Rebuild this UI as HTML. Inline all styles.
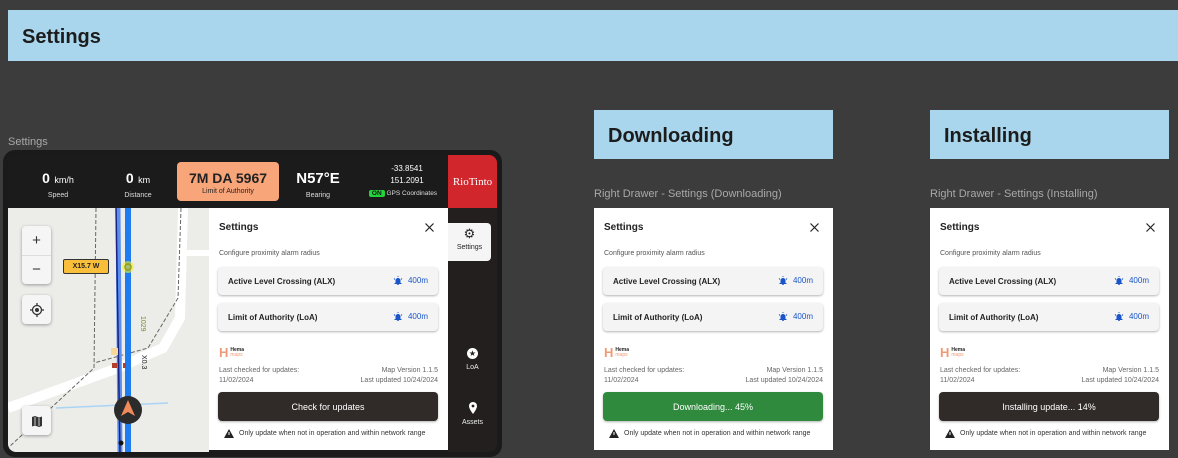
<!DOCTYPE html>
<html><head><meta charset="utf-8">
<style>
*{box-sizing:border-box;margin:0;padding:0}
body{width:1178px;height:458px;background:#3c3c3c;font-family:"Liberation Sans",sans-serif;position:relative;overflow:hidden}
.a{position:absolute}
.banner{background:#a9d6ec;color:#1c1c1c;font-weight:bold;font-size:20px;display:flex;align-items:center;padding-left:14px;padding-top:3px}
.lbl{color:#a8a8a8;font-size:11px}
.panel{position:absolute;width:239px;height:242px;background:#fff;color:#222}
.panel .t{position:absolute;left:10px;top:14px;font-size:10px;font-weight:bold;color:#222}
.panel .x{position:absolute;right:14px;top:15px}
.panel .cfg{position:absolute;left:10px;top:42px;font-size:7px;color:#555}
.card{position:absolute;left:9px;width:220px;height:28px;background:#f4f4f4;border-radius:4px;box-shadow:0 1px 2px rgba(0,0,0,.3);font-size:8px;font-weight:bold;color:#222;display:flex;align-items:center;padding-left:10px}
.card .v{position:absolute;right:10px;top:9px;color:#1a56c8;font-weight:normal;font-size:8px;display:flex;align-items:center;gap:5px}
.hema{position:absolute;left:10px;top:137px;display:flex;align-items:center;gap:2px}
.meta{position:absolute;left:10px;right:10px;top:158px;font-size:7px;color:#666;line-height:10px}
.meta .r{position:absolute;right:0;top:0;text-align:right}
.btn{position:absolute;left:9px;width:220px;top:184px;height:29px;border-radius:4px;color:#fff;font-size:9px;display:flex;align-items:center;justify-content:center;box-shadow:0 1px 2px rgba(0,0,0,.3)}
.warn{position:absolute;left:15px;top:221px;font-size:7px;color:#333;display:flex;align-items:center;gap:5px}
.tb{color:#fff;text-align:center;position:absolute}
.tb b{font-size:14px}
.tb span{font-size:7px;color:#ddd;display:block;margin-top:4px}
.mapbtn{position:absolute;background:#f5f5f5;border-radius:4px;box-shadow:0 1px 3px rgba(0,0,0,.35);width:29px;display:flex;align-items:center;justify-content:center;color:#333}
</style></head><body>

<div class="a banner" style="left:8px;top:10px;width:1170px;height:51px">Settings</div>
<div class="a banner" style="left:594px;top:110px;width:239px;height:49px">Downloading</div>
<div class="a banner" style="left:930px;top:110px;width:239px;height:49px">Installing</div>

<div class="a lbl" style="left:8px;top:136px">Settings</div>
<div class="a lbl" style="left:594px;top:188px">Right Drawer - Settings (Downloading)</div>
<div class="a lbl" style="left:930px;top:188px">Right Drawer - Settings (Installing)</div>

<!-- device -->
<div class="a" style="left:3px;top:150px;width:499px;height:307px;background:#1a1a1a;border-radius:12px"></div>
<div class="a" style="left:8px;top:155px;width:489px;height:297px;background:#1b1b1b;border-radius:8px;overflow:hidden">
  <div class="tb" style="left:20px;top:15px;width:60px"><b>0</b> <small style="font-size:9px">km/h</small><span>Speed</span></div>
  <div class="tb" style="left:100px;top:15px;width:60px"><b>0</b> <small style="font-size:9px">km</small><span>Distance</span></div>
  <div class="a" style="left:169px;top:7px;width:102px;height:39px;background:#f9a57a;border-radius:4px;text-align:center;color:#222">
    <div style="font-size:14px;font-weight:bold;margin-top:8px">7M DA 5967</div>
    <div style="font-size:7px;margin-top:2px">Limit of Authority</div>
  </div>
  <div class="tb" style="left:280px;top:15px;width:60px"><b style="font-size:15px">N57°E</b><span>Bearing</span></div>
  <div class="a" style="left:350px;top:8px;width:90px;color:#fff;font-size:8px;text-align:center;line-height:12px">
    <div style="margin-left:8px">-33.8541</div><div style="margin-left:8px">151.2091</div>
    <div style="font-size:6.5px;color:#ddd;margin-top:1px"><span style="background:#22d33a;color:#111;padding:0 3px;border-radius:2px;font-weight:bold">ON</span> GPS Coordinates</div>
  </div>
  <div class="a" style="left:440px;top:0;width:49px;height:53px;background:#d1262b;color:#fff;font-family:'Liberation Serif',serif;font-size:11px;display:flex;align-items:center;justify-content:center">RioTinto</div>
  <!-- rail -->
  <div class="a" style="left:440px;top:53px;width:49px;height:244px;background:#231f1f"></div>
  <div class="a" style="left:440px;top:68px;width:43px;height:38px;background:#f5f5f5;border-radius:0 4px 4px 0;text-align:center;font-size:7px;color:#222">
    <div style="font-size:13px;margin-top:3px">⚙</div><div style="margin-top:2px">Settings</div>
  </div>
  <div class="a" style="left:440px;top:193px;width:49px;text-align:center;color:#eee;font-size:7px">
    <div style="width:11px;height:11px;border-radius:50%;background:#fff;color:#231f1f;font-size:8px;line-height:11px;margin:0 auto">★</div><div style="margin-top:5px">LoA</div>
  </div>
  <div class="a" style="left:440px;top:247px;width:49px;text-align:center;color:#eee;font-size:7px">
    <svg width="10" height="12" viewBox="0 0 10 12"><path d="M5 0a4 4 0 0 0-4 4c0 3 4 8 4 8s4-5 4-8a4 4 0 0 0-4-4z" fill="#fff"/><circle cx="5" cy="4" r="1.4" fill="#231f1f"/></svg><div style="margin-top:3px">Assets</div>
  </div>
  <!-- map -->
  <div class="a" style="left:0;top:53px;width:201px;height:244px;background:#ecece9;overflow:hidden">
    <svg class="a" style="left:0;top:0" width="201" height="244">
      <path d="M0 200 L110 160 L155 140 L172 110 L175 0" stroke="#fff" stroke-width="10" fill="none"/>
      <path d="M175 45 L201 45" stroke="#fff" stroke-width="6"/>
      <path d="M88 0 L86 160 L0 240" stroke="#666" stroke-width="1" stroke-dasharray="4 2" fill="none"/>
      <path d="M173 0 L170 90 L140 140 L86 155" stroke="#666" stroke-width="1" stroke-dasharray="4 2" fill="none"/>
      <path d="M48 200 L160 195" stroke="#aad4f5" stroke-width="1.5"/>
      <path d="M110 0 L112 244" stroke="#5a8ff0" stroke-width="5"/>
      <path d="M120 0 L120 244" stroke="#1e7cf2" stroke-width="6"/>
      <path d="M108 0 L112 244" stroke="#1a237e" stroke-width="1.5"/>
      <circle cx="120" cy="59" r="6" fill="#f3f02a" opacity=".6"/><circle cx="120" cy="59" r="3" fill="none" stroke="#9a9a10" stroke-width="1.5"/>
      <rect x="103" y="140" width="7" height="7" fill="#f7d899"/>
      <rect x="104" y="155" width="5" height="5" fill="#b5402a"/><rect x="115" y="155" width="3" height="5" fill="#b5402a"/>
      <circle cx="120" cy="202" r="14" fill="#2b2b2b"/><path d="M120 192 L127 208 L120 204 L113 208Z" fill="#f08a5a"/>
      <circle cx="113" cy="235" r="2.5" fill="#111"/>
      <text x="133" y="108" font-size="7" fill="#7a8a30" transform="rotate(90 133 108)">1029</text>
      <text x="134" y="147" font-size="7" fill="#222" transform="rotate(90 134 147)">X0.3</text>
    </svg>
    <div class="a" style="left:55px;top:51px;width:46px;height:15px;background:#f9bf3a;border:1px solid #333;border-radius:2px;font-size:7px;font-weight:bold;display:flex;align-items:center;justify-content:center;color:#222">X15.7 W</div>
    <div class="mapbtn" style="left:14px;top:18px;height:58px;flex-direction:column;font-size:15px"><div style="height:29px;line-height:29px">+</div><div style="height:29px;line-height:27px;border-top:1px solid #ddd;width:100%;text-align:center">−</div></div>
    <div class="mapbtn" style="left:14px;top:87px;height:29px"><svg width="14" height="14" viewBox="0 0 14 14"><circle cx="7" cy="7" r="4.5" fill="none" stroke="#333" stroke-width="1.3"/><circle cx="7" cy="7" r="2" fill="#333"/><path d="M7 0v2.5M7 11.5V14M0 7h2.5M11.5 7H14" stroke="#333" stroke-width="1.3"/></svg></div>
    <div class="mapbtn" style="left:14px;top:198px;height:29px"><svg width="12" height="12" viewBox="0 0 12 12"><path d="M1 2l3-1 4 1.5 3-1v9.5l-3 1-4-1.5-3 1z" fill="#333"/><path d="M4 2v8M8 3v8" stroke="#f5f5f5" stroke-width=".8"/></svg></div>
  </div>
</div>

<!-- panels -->
<div id="p1" class="panel" style="left:209px;top:208px"></div>
<div id="p2" class="panel" style="left:594px;top:208px"></div>
<div id="p3" class="panel" style="left:930px;top:208px"></div>

<template id="tpl">
  <div class="t">Settings</div>
  <svg class="x" width="9" height="9" viewBox="0 0 9 9"><path d="M.5 .5L8.5 8.5M8.5 .5L.5 8.5" stroke="#222" stroke-width="1.2"/></svg>
  <div class="cfg">Configure proximity alarm radius</div>
  <div class="card" style="top:59px">Active Level Crossing (ALX)<div class="v"><svg width="10" height="9" viewBox="0 0 10 9"><path d="M2.5 7V4.5a2.5 2.5 0 0 1 5 0V7h1v1h-7V7z M4 8.3h2v.7H4z" fill="#1a56c8"/><path d="M1 2.5L2 3.5M9 2.5L8 3.5M5 0v1" stroke="#1a56c8" stroke-width=".9"/></svg>400m</div></div>
  <div class="card" style="top:95px">Limit of Authority (LoA)<div class="v"><svg width="10" height="9" viewBox="0 0 10 9"><path d="M2.5 7V4.5a2.5 2.5 0 0 1 5 0V7h1v1h-7V7z M4 8.3h2v.7H4z" fill="#1a56c8"/><path d="M1 2.5L2 3.5M9 2.5L8 3.5M5 0v1" stroke="#1a56c8" stroke-width=".9"/></svg>400m</div></div>
  <div class="hema"><span style="color:#f09a78;font-weight:bold;font-size:13px">H</span><span style="font-size:5px;font-weight:bold;line-height:5px">Hema<br><span style="color:#f09a78;font-weight:normal">maps</span></span></div>
  <div class="meta">Last checked for updates:<br>11/02/2024<div class="r">Map Version 1.1.5<br>Last updated 10/24/2024</div></div>
  <div class="btn">X</div>
  <div class="warn"><svg width="10" height="9" viewBox="0 0 10 9"><path d="M5 0L10 9H0Z" fill="#222"/><path d="M5 3v3" stroke="#fff" stroke-width="1"/></svg>Only update when not in operation and within network range</div>
</template>
<script>
var t=document.getElementById('tpl').innerHTML;
[['p1','Check for updates','#302b29'],['p2','Downloading... 45%','#2f8a3e'],['p3','Installing update... 14%','#302b29']].forEach(function(a){
 var p=document.getElementById(a[0]);p.innerHTML=t;var b=p.querySelector('.btn');b.textContent=a[1];b.style.background=a[2];});
</script>
</body></html>
